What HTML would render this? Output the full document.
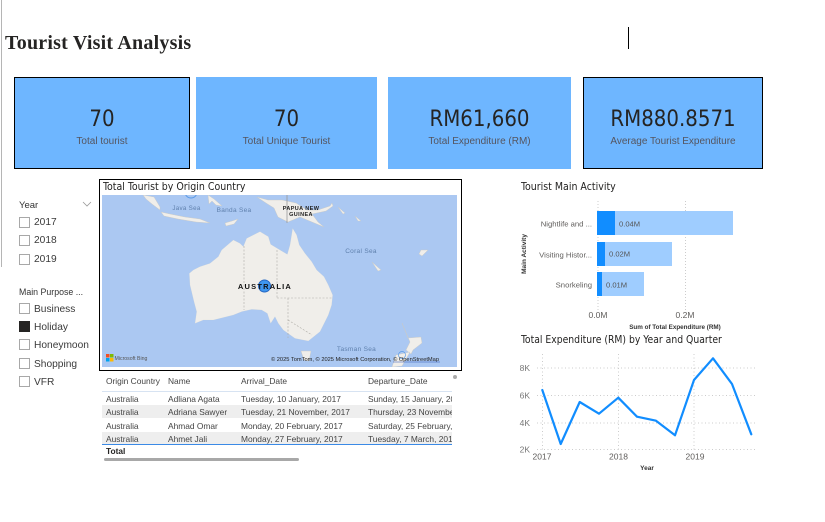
<!DOCTYPE html>
<html>
<head>
<meta charset="utf-8">
<style>
html,body{margin:0;padding:0;background:#fff}
body{width:825px;height:522px;position:relative;overflow:hidden;font-family:"Liberation Sans",sans-serif;color:#333}
.a{position:absolute;white-space:nowrap}
.card{position:absolute;top:77px;height:92px;background:#6eb6ff;box-sizing:border-box}
.card.b{border:1px solid #000}
.val{position:absolute;left:0;right:0;top:29px;text-align:center;font-family:"DejaVu Sans","Liberation Sans",sans-serif;font-stretch:condensed;font-size:22px;line-height:28px;color:#252423}
.card.b .val{top:28px}
.lab{position:absolute;left:0;right:0;top:58px;text-align:center;font-size:10px;line-height:14px;color:#55555f}
.card.b .lab{top:57px}
.cb{position:absolute;left:19px;width:9px;height:9px;border:1px solid #a8a8a8;background:#fff}
.sl{position:absolute;left:34px;font-size:10.2px;line-height:14px;color:#3a3a3a;margin-top:1px}
.t{position:absolute;font-size:8.4px;line-height:12px;color:#444;white-space:nowrap;overflow:hidden}
.h{font-family:"DejaVu Sans Condensed","DejaVu Sans",sans-serif;font-size:10.5px;color:#252423;position:absolute;white-space:nowrap;line-height:14px}
</style>
</head>
<body>
<div class="a" style="left:1px;top:0;width:1px;height:267px;background:#b5b5b5"></div>
<div class="a" style="left:628px;top:27px;width:1px;height:22px;background:#000"></div>
<div class="a" style="left:5px;top:33px;font-family:'Liberation Serif',serif;font-weight:bold;font-size:20px;letter-spacing:.22px;line-height:21px;color:#252423">Tourist Visit Analysis</div>

<div class="card b" style="left:14px;width:176px"><div class="val">70</div><div class="lab">Total tourist</div></div>
<div class="card" style="left:196px;width:181px"><div class="val">70</div><div class="lab">Total Unique Tourist</div></div>
<div class="card" style="left:388px;width:183px"><div class="val">RM61,660</div><div class="lab">Total Expenditure (RM)</div></div>
<div class="card b" style="left:583px;width:180px"><div class="val">RM880.8571</div><div class="lab">Average Tourist Expenditure</div></div>

<!-- slicers -->
<div class="a" style="left:19px;top:199px;font-size:9.5px;line-height:13px;color:#333">Year</div>
<svg class="a" style="left:82px;top:201px" width="10" height="6"><path d="M1 1 L5 5 L9 1" fill="none" stroke="#999" stroke-width=".8"/></svg>
<div class="cb" style="top:217px"></div><div class="sl" style="top:215px">2017</div>
<div class="cb" style="top:235px"></div><div class="sl" style="top:233px">2018</div>
<div class="cb" style="top:254px"></div><div class="sl" style="top:252px">2019</div>
<div class="a" style="left:19px;top:286px;font-size:8.8px;line-height:13px;color:#333">Main Purpose ...</div>
<div class="cb" style="top:303px"></div><div class="sl" style="top:302px">Business</div>
<div class="cb" style="top:321px;background:#252423;border-color:#252423"></div><div class="sl" style="top:320px">Holiday</div>
<div class="cb" style="top:339px"></div><div class="sl" style="top:338px">Honeymoon</div>
<div class="cb" style="top:358px"></div><div class="sl" style="top:357px">Shopping</div>
<div class="cb" style="top:376px"></div><div class="sl" style="top:375px">VFR</div>

<!-- map -->
<div class="a" style="left:99px;top:179px;width:363px;height:192px;box-sizing:border-box;border:1px solid #000;background:#fff"></div>
<div class="h" style="left:103px;top:180px">Total Tourist by Origin Country</div>
<svg class="a" style="left:0;top:0" width="825" height="522" font-family="Liberation Sans">
 <defs><clipPath id="mc"><rect x="102" y="195" width="355" height="172"/></clipPath>
 <filter id="bl" x="0" y="0" width="100%" height="100%"><feGaussianBlur stdDeviation=".35"/></filter></defs>
 <g clip-path="url(#mc)">
  <rect x="102" y="195" width="355" height="172" fill="#abc8f2"/>
  <g fill="#f0eeea" stroke="#c9c8c2" stroke-width=".4" filter="url(#bl)">
   <path d="M143 195 L154 197 L160 207 L160 210 L152 204 L146 199 Z"/>
   <path d="M161 212 L170 214 L185 217 L200 219 L210 223 L196 222 L178 219 L164 216 Z"/>
   <path d="M208 195 L214 199 L222 206 L216 205 L212 201 L209 204 Z"/>
   <path d="M225 223 L232 221 L238 219 L234 224 L226 226 Z"/>
   <path d="M257 197 L268 200 L282 200 L296 203 L307 210 L318 210 L330 206 L332 203 L333 206 L326 211 L312 214 L318 222 L324 227 L312 222 L300 217 L288 222 L278 217 L274 208 L266 203 Z"/>
   <path d="M338 207 L345 213 L343 214 Z M355 216 L361 221 L358 221 Z"/>
   <path d="M372 262 L381 270 L378 271 Z"/>
   <path d="M421 250 L428 250 L422 256 L419 254 Z"/>
   <path d="M402 323 L408 338 L421 337 L422 343 L413 350 L411 354 L406 350 L410 342 Z"/>
   <path d="M396 355 L410 352 L402 366 L392 367 Z"/>
   <path d="M301 351 L311 351 L309 361 L304 360 Z"/>
   <g transform="translate(180 195) scale(.33333)">
    <path d="M28 235 L40 225 L60 215 L90 205 L115 185 L125 165 L160 135 L180 145 L190 155 L200 130 L240 110 L265 125 L272 148 L300 165 L322 178 L330 150 L338 100 L350 120 L358 150 L375 175 L395 200 L410 225 L432 245 L445 270 L458 300 L455 330 L445 360 L420 410 L385 438 L345 430 L310 405 L295 385 L285 365 L272 385 L262 355 L245 345 L215 343 L185 350 L160 360 L100 375 L70 375 L45 385 L50 350 L42 320 L30 270 Z"/>
   </g>
  </g>
  <g stroke="#b0aea8" stroke-width=".6" stroke-dasharray="2 1.5" fill="none">
   <path d="M244 246 V310"/>
   <path d="M277 250 V298 M288 298 V338"/>
   <path d="M277 298 H332"/>
   <path d="M288 320 L312 335"/>
  </g>
  <path d="M287 195 V223" stroke="#999" stroke-width=".8"/>
  <circle cx="191" cy="192" r="6" fill="none" stroke="#5a9be8" stroke-width="1"/>
  <circle cx="402" cy="355" r="3.500" fill="none" stroke="#5a9be8" stroke-width=".7"/>
  <text x="186.500" y="210" font-size="6.200" fill="#5f80ad" text-anchor="middle" letter-spacing=".3">Java Sea</text>
  <text x="234" y="212" font-size="6.500" fill="#5f80ad" text-anchor="middle" letter-spacing=".3">Banda Sea</text>
  <text x="361" y="253" font-size="6.500" fill="#5f80ad" text-anchor="middle" letter-spacing=".3">Coral Sea</text>
  <text x="356.500" y="351" font-size="6.500" fill="#5f80ad" text-anchor="middle" letter-spacing=".3">Tasman Sea</text>
  <text x="301" y="210" font-size="5.500" fill="#222" font-weight="bold" text-anchor="middle" letter-spacing=".4">PAPUA NEW</text>
  <text x="301" y="216" font-size="5.500" fill="#222" font-weight="bold" text-anchor="middle" letter-spacing=".4">GUINEA</text>
  <circle cx="264.500" cy="286" r="6" fill="#3f96ee" stroke="#2667c2" stroke-width="1"/>
  <text x="265" y="289" font-size="7.500" fill="#111" font-weight="bold" text-anchor="middle" letter-spacing="1.200">AUSTRALIA</text>
  <rect x="106" y="354" width="3.500" height="3.500" fill="#f25022"/><rect x="110" y="354" width="3.500" height="3.500" fill="#7fba00"/>
  <rect x="106" y="358" width="3.500" height="3.500" fill="#00a4ef"/><rect x="110" y="358" width="3.500" height="3.500" fill="#ffb900"/>
  <text x="114.500" y="360" font-size="5.200" fill="#555">Microsoft Bing</text>
  <text x="271" y="361" font-size="5.700" fill="#222">© 2025 TomTom, © 2025 Microsoft Corporation, © OpenStreetMap</text>
  <path d="M393 362 H440" stroke="#2a4fb0" stroke-width=".6"/>
 </g>
</svg>

<!-- table -->
<div class="t" style="left:106px;top:375px">Origin Country</div>
<div class="t" style="left:168px;top:375px">Name</div>
<div class="t" style="left:241px;top:375px">Arrival_Date</div>
<div class="t" style="left:368px;top:375px">Departure_Date</div>
<div class="a" style="left:453px;top:375px;width:4px;height:4px;border-radius:50%;background:#aaa"></div>
<div class="a" style="left:102px;top:391px;width:350px;height:1px;background:#d7e3f2"></div>
<div class="a" style="left:102px;top:405px;width:350px;height:13px;background:#eeeeee"></div>
<div class="a" style="left:102px;top:432px;width:350px;height:12px;background:#eeeeee"></div>
<div class="t" style="left:106px;top:393px">Australia</div><div class="t" style="left:168px;top:393px">Adliana Agata</div><div class="t" style="left:241px;top:393px">Tuesday, 10 January, 2017</div><div class="t" style="left:368px;top:393px;width:84px">Sunday, 15 January, 2017</div>
<div class="t" style="left:106px;top:406px">Australia</div><div class="t" style="left:168px;top:406px">Adriana Sawyer</div><div class="t" style="left:241px;top:406px">Tuesday, 21 November, 2017</div><div class="t" style="left:368px;top:406px;width:84px">Thursday, 23 November, 2017</div>
<div class="t" style="left:106px;top:420px">Australia</div><div class="t" style="left:168px;top:420px">Ahmad Omar</div><div class="t" style="left:241px;top:420px">Monday, 20 February, 2017</div><div class="t" style="left:368px;top:420px;width:84px">Saturday, 25 February, 2017</div>
<div class="t" style="left:106px;top:433px">Australia</div><div class="t" style="left:168px;top:433px">Ahmet Jali</div><div class="t" style="left:241px;top:433px">Monday, 27 February, 2017</div><div class="t" style="left:368px;top:433px;width:84px">Tuesday, 7 March, 2017</div>
<div class="a" style="left:102px;top:444px;width:350px;height:1px;background:#3b8ae6"></div>
<div class="t" style="left:106px;top:445px;font-weight:bold;color:#252423">Total</div>
<div class="a" style="left:104px;top:458px;width:195px;height:3px;border-radius:2px;background:#a8a8a8"></div>

<!-- bar chart -->
<div class="h" style="left:521px;top:180px">Tourist Main Activity</div>
<svg class="a" style="left:0;top:0" width="825" height="522" font-family="Liberation Sans">
 <path d="M598 201 V310 M685.500 201 V310" stroke="#ccc" stroke-width="1" stroke-dasharray="1 2" fill="none"/>
 <rect x="597" y="211" width="136" height="24" fill="#9fcdff"/><rect x="597" y="211" width="18" height="24" fill="#118dff"/>
 <rect x="597" y="242" width="75" height="24" fill="#9fcdff"/><rect x="597" y="242" width="8" height="24" fill="#118dff"/>
 <rect x="597" y="272" width="47" height="24" fill="#9fcdff"/><rect x="597" y="272" width="5" height="24" fill="#118dff"/>
 <g font-size="7.600" fill="#555">
  <text x="619" y="226.500">0.04M</text><text x="609" y="256.500">0.02M</text><text x="606" y="287.500">0.01M</text>
 </g>
 <g font-size="7.700" fill="#605e5c" text-anchor="end">
  <text x="592" y="226.500">Nightlife and ...</text><text x="592" y="257.500">Visiting Histor...</text><text x="592" y="287.500">Snorkeling</text>
 </g>
 <g font-size="8.500" fill="#605e5c" text-anchor="middle">
  <text x="598" y="318">0.0M</text><text x="685" y="318">0.2M</text>
 </g>
 <text x="675" y="329" font-size="6.300" font-weight="bold" fill="#333" text-anchor="middle">Sum of Total Expenditure (RM)</text>
 <text transform="translate(526 254) rotate(-90)" font-size="6.500" font-weight="bold" fill="#333" text-anchor="middle">Main Activity</text>

 <!-- line chart -->
 <g stroke="#ccc" stroke-width="1" stroke-dasharray="1 2.500" fill="none">
  <path d="M537 368 H757 M537 395.500 H757 M537 423 H757 M537 449.500 H757"/>
  <path d="M542.500 354 V451 M618.500 354 V451 M694 354 V451"/>
 </g>
 <g font-size="8.500" fill="#777" text-anchor="end">
  <text x="530" y="371">8K</text><text x="530" y="398.500">6K</text><text x="530" y="426">4K</text><text x="530" y="452.500">2K</text>
 </g>
 <g font-size="8.500" fill="#605e5c" text-anchor="middle">
  <text x="542" y="459.500">2017</text><text x="618.500" y="459.500">2018</text><text x="695" y="459.500">2019</text>
 </g>
 <text x="647" y="470" font-size="6.500" font-weight="bold" fill="#333" text-anchor="middle">Year</text>
 <polyline points="542.300,390 560.700,444 579.700,402 599,413.700 618.300,397.700 637,416.700 656,420.700 675,435.300 694,380 713,358.300 732,384 751.300,434.300" fill="none" stroke="#118dff" stroke-width="2.200" stroke-linejoin="round" stroke-linecap="round"/>
</svg>
<div class="h" style="left:521px;top:333px;font-size:10.3px">Total Expenditure (RM) by Year and Quarter</div>
</body>
</html>
